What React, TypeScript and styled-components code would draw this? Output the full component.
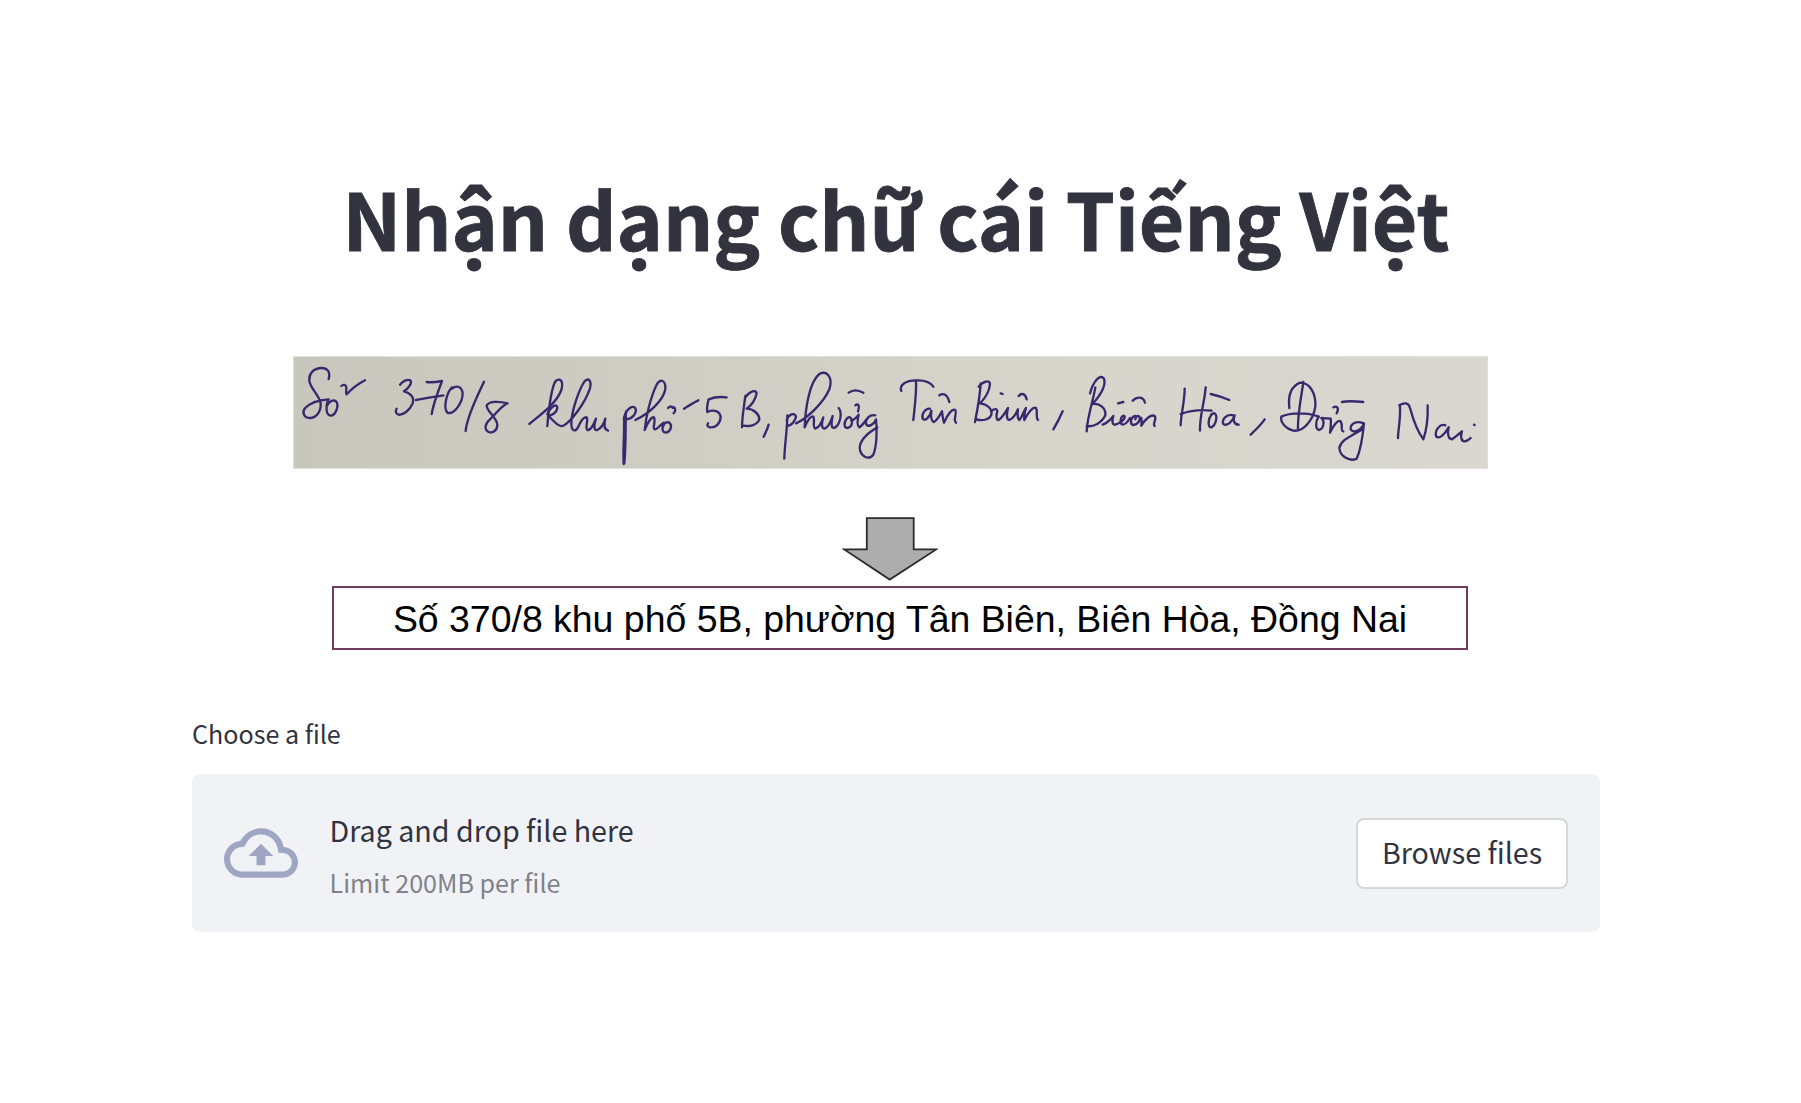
import React from 'react';
import styled, { createGlobalStyle } from 'styled-components';

const GlobalStyle = createGlobalStyle`
  * { box-sizing: border-box; }
  body {
    margin: 0;
    background: #ffffff;
    color: #31333f;
    font-family: "Noto Sans CJK SC", "Noto Sans", sans-serif;
  }
`;

const Page = styled.main`
  display: flex;
  flex-direction: column;
  width: 1408px;
  height: 1103px;
  margin: 0 auto 0 192px;
  padding-top: 161px;
`;

const Title = styled.h1`
  margin: 0;
  height: 112px;
  line-height: 112px;
  font-size: 78.5px;
  font-weight: 700;
  color: #33323f;
  -webkit-text-stroke: 0.9px #33323f;
  text-align: center;
  white-space: nowrap;
`;

const Figure = styled.figure`
  display: flex;
  flex-direction: column;
  margin: 83px 0 0 101px;
  width: 1195px;
`;

const Photo = styled.svg`
  display: block;
  width: 1195px;
  height: 113px;
`;

const Arrow = styled.svg`
  display: block;
  width: 96px;
  height: 66px;
  margin: 47px 0 0 549px;
`;

const Result = styled.figcaption`
  display: flex;
  align-items: center;
  justify-content: center;
  width: 1136px;
  height: 64px;
  margin: 4px 0 0 39px;
  padding-top: 2px;
  border: 2px solid #6f3c5e;
  color: #000000;
  font-family: "Liberation Sans", Arial, sans-serif;
  font-size: 37.43px;
  line-height: 58px;
  white-space: nowrap;
`;

const Label = styled.label`
  margin-top: 63px;
  height: 40px;
  line-height: 40px;
  font-size: 25.1px;
`;

const Dropzone = styled.section`
  display: flex;
  align-items: center;
  height: 158px;
  margin-top: 21px;
  padding: 0 32px;
  border-radius: 8px;
  background: #f0f2f6;
`;

const CloudIcon = styled.svg`
  display: block;
  width: 74px;
  height: 74px;
  fill: #9fa6c4;
`;

const Instructions = styled.div`
  display: flex;
  flex: 1;
  flex-direction: column;
  margin-left: 31.5px;
  padding-top: 5px;
`;

const Prompt = styled.span`
  height: 52px;
  line-height: 52px;
  font-size: 28.65px;
`;

const Limit = styled.span`
  height: 52px;
  line-height: 52px;
  font-size: 25.1px;
  color: #808289;
`;

const BrowseButton = styled.button`
  width: 212px;
  height: 71px;
  padding: 0 0 2px;
  border: 2px solid #d6d6d9;
  border-radius: 8px;
  background: #ffffff;
  color: #31333f;
  font-family: inherit;
  font-size: 28.65px;
  line-height: 60px;
  white-space: nowrap;
`;

/* Pen strokes of the handwritten address, one group for each run of words. */
const handwriting: { x: number; strokes: string[] }[] = [
  {
    x: -13,
    strokes: [
      'M146 117C152 95 142 83 122 84C98 86 86 104 88 122C90 145 118 165 122 190C124 215 108 234 90 234C70 234 66 215 75 205C90 188 112 180 146 178',
      'M144 180C136 200 138 226 152 227C168 226 178 195 168 184C160 178 146 184 142 196',
      'M184 138C190 132 198 134 199 142C200 150 196 156 200 163C212 150 230 134 255 121',
      'M360 134C368 124 382 116 391 121C398 130 384 146 372 154C390 158 404 172 398 190C390 210 370 226 355 224C346 221 346 212 350 206',
      'M440 126C455 128 470 126 486 123C476 150 460 190 455 222M408 180C430 176 460 170 490 166',
      'M516 142C498 160 490 205 502 218C520 226 548 190 548 160C546 140 530 134 516 146',
      'M612 125C596 160 560 230 557 273',
      'M683 190C660 184 628 182 620 196C618 212 650 232 652 254C652 274 636 280 626 276C610 268 616 250 632 236C645 224 658 205 678 192',
    ],
  },
  {
    x: 227,
    strokes: [
      'M28 252C60 225 110 190 124 150C132 120 118 112 106 124C92 150 86 210 82 258',
      'M82 222C95 196 112 190 112 204C110 218 96 226 84 228C98 236 112 262 128 258C150 250 195 190 210 145C216 118 204 112 192 126C172 160 154 220 154 250C154 275 166 276 174 262C182 244 192 230 200 232C206 240 194 262 202 270C214 272 222 250 228 236C222 256 220 272 232 270C246 264 252 250 256 236C252 252 250 268 264 272',
      'M312 232C314 280 308 330 311 372M318 215C316 270 318 320 313 370',
      'M312 235C316 210 335 194 346 204C352 220 336 236 320 238',
      'M346 240C390 220 430 180 436 148C438 118 420 116 410 134C392 170 378 230 374 270C382 250 394 230 402 232C408 244 396 266 404 268C412 268 420 256 428 250',
      'M432 248C424 262 426 278 438 278C452 276 458 256 448 248C440 244 432 250 430 258',
      'M444 204C450 198 456 198 458 204M462 202C468 206 466 214 461 220M492 206C505 198 520 188 535 181',
      'M620 172C602 170 585 170 566 178C562 192 560 206 562 216C580 208 600 212 602 232C600 252 586 264 570 262C562 260 560 256 564 250',
      'M676 168C672 200 666 235 666 262M676 172C690 152 708 148 710 160C706 180 692 198 680 206C700 206 718 222 718 238C712 254 690 262 668 256',
      'M746 254C742 268 736 280 731 290',
    ],
  },
  {
    x: 467,
    strokes: [
      'M82 226C82 270 74 310 73 356M80 240C86 222 104 216 108 230C106 244 94 256 82 258',
      'M108 250C140 236 190 190 208 148C220 112 200 90 178 102C150 124 136 200 134 262C142 240 154 226 160 230C166 240 156 262 166 266C178 262 186 244 190 232C184 250 184 266 194 266C206 262 214 240 218 228C214 246 212 264 222 264C234 260 242 240 242 226C242 214 240 208 236 204',
      'M262 234C250 246 252 264 262 264C276 262 280 244 272 234C266 228 258 236 256 244M274 242C282 240 290 232 296 224C292 240 290 256 298 262C306 258 312 248 318 240',
      'M286 196C294 190 300 194 294 214M266 158C280 148 296 150 310 158',
      'M346 226C330 222 316 236 318 252C324 264 342 254 348 238C352 270 350 320 340 344C326 362 300 350 299 322C302 294 330 276 352 262',
      'M424 153C416 134 440 120 470 121C496 120 512 128 520 140M468 122C470 160 464 200 460 240',
      'M510 206C496 204 484 222 488 236C496 246 510 230 514 212C512 230 512 244 522 246C532 240 540 226 546 214C548 230 550 246 552 248C562 226 576 204 586 210C592 222 578 240 588 248',
      'M538 166C550 158 562 162 568 186',
      'M662 130C660 170 652 210 645 246M656 140C668 124 690 118 690 132C688 156 672 178 660 190C680 192 698 206 694 224C690 238 668 244 650 238',
      'M694 214C700 206 712 204 712 214C708 226 708 240 716 240C728 232 738 214 744 204C740 220 738 240 748 240C760 236 768 222 774 208C772 222 772 236 778 240C786 232 792 210 798 204C794 216 792 232 793 240C804 218 820 198 828 204C834 216 826 232 834 240',
      'M722 160l6 2M776 168C784 158 796 160 800 178',
    ],
  },
  {
    x: 747,
    strokes: [
      'M68 214C60 232 50 252 40 268',
      'M166 142C160 180 142 230 140 274M150 160C160 124 180 100 192 116C200 140 172 176 158 192C180 190 198 204 196 226C186 248 160 262 140 258',
      'M188 254C204 248 214 236 220 228C216 242 216 256 226 254C240 250 256 238 254 229C246 222 238 240 244 252C254 258 264 244 270 234M286 228C272 230 268 252 280 255C294 254 304 238 297 229C292 226 288 230 286 238M304 234C306 242 304 250 304 257C316 236 334 222 344 228C352 240 336 250 344 258',
      'M234 190L250 186M278 182C292 168 310 170 315 188',
      'M434 146C434 186 422 226 422 256M497 142C494 186 478 230 480 272M422 222C450 212 480 208 515 212',
      'M515 222C502 240 504 264 514 262C528 256 534 228 524 220C516 218 508 230 506 244M512 162C530 166 550 172 568 180',
      'M580 226C560 220 544 240 550 252C562 260 578 244 584 226C578 240 582 254 596 254',
      'M674 238C660 258 644 272 632 284',
    ],
  },
  {
    x: 957,
    strokes: [
      'M160 126C154 170 142 226 144 270M118 204C114 170 122 140 150 128C180 128 198 160 196 200C190 240 160 276 130 272C104 264 90 244 94 230C120 218 170 216 206 230',
      'M206 230C196 244 196 266 206 270C220 268 226 244 214 234C224 236 236 234 242 236C244 250 242 264 240 278C250 256 264 238 272 244C280 256 270 272 280 274',
      'M250 202C262 196 268 204 260 220M276 186C296 182 320 184 340 186',
      'M340 250C320 240 300 252 302 268C312 282 334 270 342 250C338 290 332 330 320 356C300 366 270 350 268 324C272 300 300 290 340 266',
      'M450 200C452 240 444 270 444 294M448 196C464 186 476 188 480 204C490 240 506 280 520 298C530 270 534 230 533 196',
      'M586 256C570 250 554 270 558 288C566 300 584 284 596 262C592 280 594 298 606 298C618 290 628 280 636 274C630 290 634 304 644 304C652 304 658 298 662 294',
      'M672 254l2 1',
    ],
  },
];

function HandwrittenNote() {
  return (
    <Photo viewBox="0 0 1195 113">
      <defs>
        <linearGradient id="paper" x1="0" x2="1" y1="0" y2="0">
          <stop offset="0" stopColor="#c8c7bd" />
          <stop offset="0.3" stopColor="#cecdc4" />
          <stop offset="0.65" stopColor="#d6d6cd" />
          <stop offset="1" stopColor="#d9d7cf" />
        </linearGradient>
      </defs>
      <rect x="0.5" y="0.5" width="1194" height="112" fill="url(#paper)" stroke="#e0dfd9" />
      {handwriting.map((run) => (
        <g
          key={run.x}
          transform={`translate(${run.x} -16) scale(0.33333)`}
          fill="none"
          stroke="#39286d"
          strokeWidth="7"
          strokeLinecap="round"
          strokeLinejoin="round"
        >
          {run.strokes.map((d) => (
            <path key={d} d={d} />
          ))}
        </g>
      ))}
    </Photo>
  );
}

export default function App() {
  return (
    <>
      <GlobalStyle />
      <Page>
        <Title>Nhận dạng chữ cái Tiếng Việt</Title>
        <Figure>
          <HandwrittenNote />
          <Arrow viewBox="0 0 96 66">
            <path
              d="M24.8 2.2H71.7V33.4H94.2L47.7 63.6L2.2 33.4H24.8Z"
              fill="#adadad"
              stroke="#2b2b2b"
              strokeWidth="1.8"
            />
          </Arrow>
          <Result>Số 370/8 khu phố 5B, phường Tân Biên, Biên Hòa, Đồng Nai</Result>
        </Figure>
        <Label>Choose a file</Label>
        <Dropzone>
          <CloudIcon viewBox="0 0 24 24">
            <path d="M19.35 10.04A7.49 7.49 0 0 0 12 4C9.11 4 6.6 5.64 5.35 8.04A5.994 5.994 0 0 0 0 14c0 3.31 2.69 6 6 6h13c2.76 0 5-2.24 5-5 0-2.64-2.05-4.78-4.65-4.96zM19 18H6c-2.21 0-4-1.79-4-4 0-2.05 1.53-3.76 3.56-3.97l1.07-.11.5-.95A5.469 5.469 0 0 1 12 6c2.62 0 4.88 1.86 5.39 4.43l.3 1.5 1.53.11A2.98 2.98 0 0 1 22 15c0 1.65-1.35 3-3 3zM8 13h2.55v3h2.9v-3H16l-4-4-4 4z" />
          </CloudIcon>
          <Instructions>
            <Prompt>Drag and drop file here</Prompt>
            <Limit>Limit 200MB per file</Limit>
          </Instructions>
          <BrowseButton type="button">Browse files</BrowseButton>
        </Dropzone>
      </Page>
    </>
  );
}
